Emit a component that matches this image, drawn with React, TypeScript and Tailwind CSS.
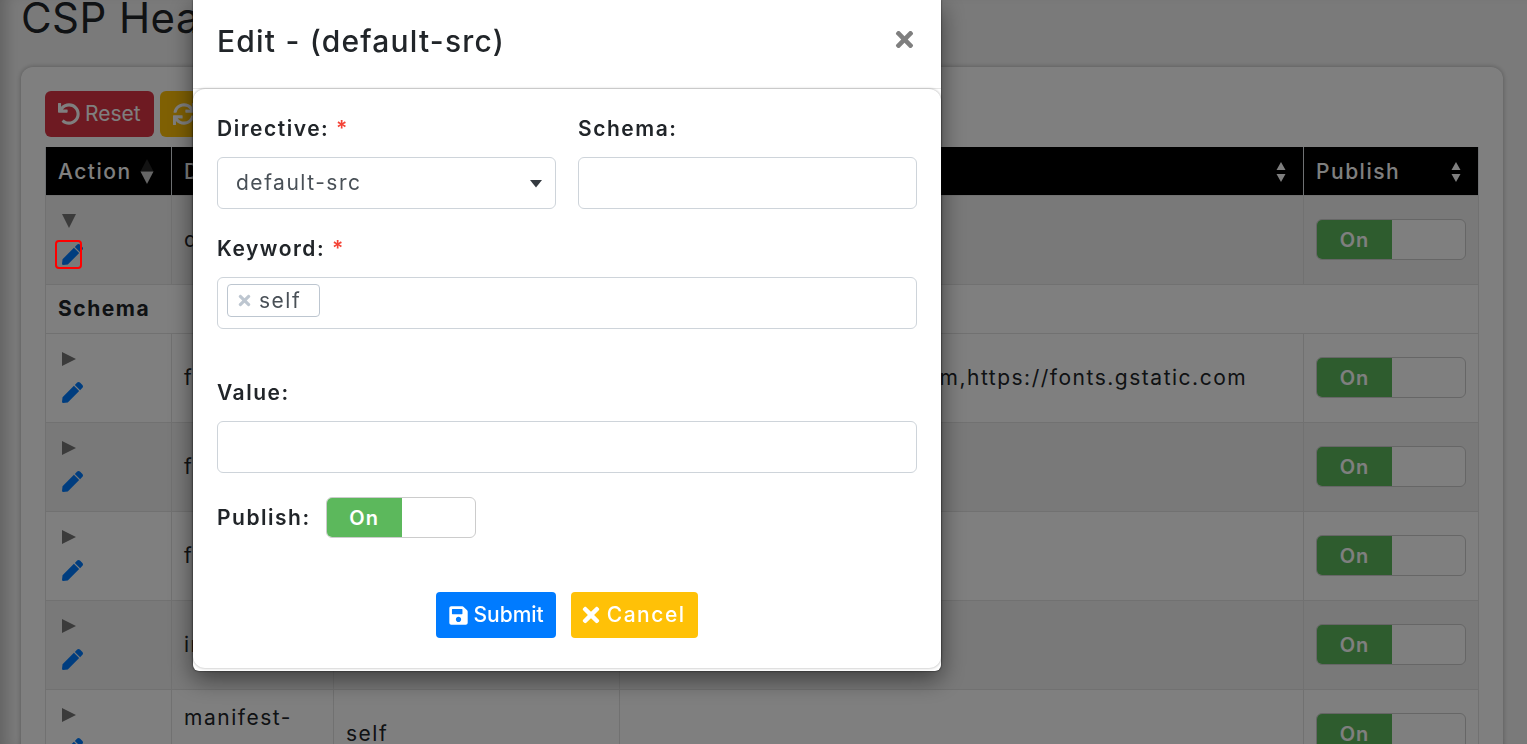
import React, { useState } from 'react';
import { FaPen, FaSave, FaSync, FaTimes, FaUndo } from 'react-icons/fa';

interface IDirective {
  name: string;
  keyword: string;
  value: string;
}

const directives: IDirective[] = [
  { name: 'default-src', keyword: 'self', value: '' },
  {
    name: 'font-src',
    keyword: 'self',
    value: 'https://fonts.googleapis.com,https://fonts.gstatic.com',
  },
  { name: 'form-action', keyword: 'self', value: '' },
  { name: 'frame-src', keyword: 'self', value: '' },
  { name: 'img-src', keyword: 'self', value: '' },
  { name: 'manifest-src', keyword: 'self', value: '' },
];

const Switch: React.FC<{ label: string }> = ({ label }) => {
  const [on, setOn] = useState<boolean>(true);

  return (
    <label className="flex h-[41px] w-[150px] cursor-pointer overflow-hidden rounded-md border border-[#ccc] bg-white tracking-wider">
      <input
        type="checkbox"
        className="sr-only"
        aria-label={label}
        checked={on}
        onChange={() => setOn(!on)}
      />
      {on ? (
        <span className="flex w-[75px] items-center justify-center bg-[#5cb85c] text-[20px] font-semibold text-white">
          On
        </span>
      ) : (
        <span className="ml-auto flex w-[75px] items-center justify-center bg-[#eee] text-[20px] font-semibold">
          Off
        </span>
      )}
    </label>
  );
};

const SortIcon: React.FC<{ active?: boolean }> = ({ active = false }) => {
  if (active) {
    return (
      <svg width="14" height="26" viewBox="0 0 14 26" fill="#fff">
        <path d="M7 0l6.500 12.500h-13z" opacity="0.15" />
        <path d="M7 25l6.500-12.500h-13z" opacity="0.8" />
      </svg>
    );
  }
  return (
    <svg width="10" height="20" viewBox="0 0 10 20" fill="#fff">
      <path d="M5 0l4.5 8h-9zM5 20l4.5-8h-9z" />
    </svg>
  );
};

const HeadCell: React.FC<{ title: string; className?: string; active?: boolean }> = ({
  title,
  className = '',
  active = false,
}) => (
  <th className={`h-12 border-x border-[#dee2e6] bg-black px-3 pt-[2px] text-left font-medium text-white ${className}`}>
    <div className={active ? 'flex items-center gap-2' : 'flex items-center justify-between pr-[5px]'}>
      {title}
      <SortIcon active={active} />
    </div>
  </th>
);

const DirectiveRow: React.FC<{ item: IDirective; open?: boolean; striped?: boolean }> = ({
  item,
  open = false,
  striped = false,
}) => (
  <tr className={striped ? 'bg-[#f2f2f2]' : 'bg-white'}>
    <td className="h-[89px] border border-[#e2e2e2] pl-4">
      <div className="flex flex-col items-start gap-4">
        <button type="button" aria-label="Toggle details" className="text-[#777]">
          <svg width="14" height="14" viewBox="0 0 14 14" fill="currentColor">
            <path d={open ? 'M0 0h14L7 14z' : 'M0 0v14l14-7z'} />
          </svg>
        </button>
        <a href="#edit" aria-label={`Edit ${item.name}`} className="relative text-[#007bff]">
          <FaPen size={21} />
          {open && (
            <span className="absolute -left-[7px] -top-1 z-50 h-[29px] w-[27px] rounded-[4px] border-2 border-[#f00]" />
          )}
        </a>
      </div>
    </td>
    <td className="border border-[#e2e2e2] px-3">{item.name}</td>
    <td className="border border-[#e2e2e2] px-3">{item.keyword}</td>
    <td className="border border-[#e2e2e2] px-3">{item.value}</td>
    <td className="border border-[#e2e2e2] px-3">
      <Switch label={`Publish ${item.name}`} />
    </td>
  </tr>
);

const EditModal: React.FC = () => (
  <div className="fixed inset-0 z-40 bg-black/50 pl-[193px]">
    <div
      role="dialog"
      aria-label="Edit - (default-src)"
      className="w-[748px] rounded-b-md bg-white shadow-[0_8px_24px_rgba(0,0,0,0.5),0_0_2px_rgba(0,0,0,0.8)]"
    >
      <div className="flex h-[88px] items-start justify-between px-6 pt-[18px]">
        <h5 className="text-[30px] font-medium leading-[46px] tracking-[0.04em]">Edit - (default-src)</h5>
        <button type="button" aria-label="Close" className="mt-[9px] text-[#7f7f7f]">
          <FaTimes size={25} />
        </button>
      </div>

      <div className="border-t border-[#e6e6e6] pb-[3px]">
        <form className="rounded-xl px-6 pb-[30px] pt-6 shadow-[0_0_3px_rgba(0,0,0,0.35)]">
          <div className="grid grid-cols-2 gap-[22px]">
            <div>
              <label htmlFor="directive" className="mb-3 block leading-8 font-semibold">
                Directive: <span className="text-[#f44336]">*</span>
              </label>
              <div className="relative">
                <select
                  id="directive"
                  className="h-[52px] w-full appearance-none rounded-md border border-[#ced4da] bg-white px-[18px] text-[#495057]"
                >
                  {directives.map((d) => (
                    <option key={d.name}>{d.name}</option>
                  ))}
                </select>
                <svg
                  className="pointer-events-none absolute right-[14px] top-[23px]"
                  width="12"
                  height="8"
                  viewBox="0 0 12 8"
                  fill="#343a40"
                >
                  <path d="M0 0h12L6 7.500z" />
                </svg>
              </div>
            </div>
            <div>
              <label htmlFor="schema" className="mb-3 block leading-8 font-semibold">
                Schema:
              </label>
              <input id="schema" className="h-[52px] w-full rounded-md border border-[#ced4da] px-[18px]" />
            </div>
          </div>

          <label htmlFor="keyword" className="mb-3 mt-6 block leading-8 font-semibold">
            Keyword: <span className="text-[#f44336]">*</span>
          </label>
          <div className="flex h-[52px] items-start rounded-md border border-[#ced4da] px-[9px] pt-[6px]">
            <span className="flex h-[33px] w-[93px] items-center gap-[6px] rounded-[4px] border border-[#bdc6d0] pl-2 text-[#495057]">
              <button type="button" aria-label="Remove self" className="text-[#bdc6d0]">
                <FaTimes size={17} />
              </button>
              self
            </span>
            <input id="keyword" className="h-[33px] min-w-0 flex-1 px-2 outline-none" />
          </div>

          <label htmlFor="value" className="mb-3 mt-12 block leading-8 font-semibold">
            Value:
          </label>
          <input id="value" className="h-[52px] w-full rounded-md border border-[#ced4da] px-[18px]" />

          <div className="mt-6 flex items-center gap-[15px]">
            <span className="font-semibold">Publish:</span>
            <Switch label="Publish" />
          </div>

          <div className="mt-[54px] flex justify-center gap-[15px]">
            <button
              type="submit"
              className="flex h-[46px] items-center gap-1 rounded-[4px] bg-[#007bff] px-3 font-medium tracking-normal text-white"
            >
              <FaSave size={21} />
              Submit
            </button>
            <button
              type="button"
              className="flex h-[46px] items-center gap-1 rounded-[4px] bg-[#ffc107] pl-2 pr-3 font-medium text-white"
            >
              <FaTimes size={24} />
              Cancel
            </button>
          </div>
        </form>
      </div>
    </div>
  </div>
);

const App: React.FC = () => {
  return (
    <div className="h-screen overflow-hidden bg-[#f5f5f5] px-6 pl-[21px] font-['Inter',sans-serif] text-[21px] tracking-[0.072em] text-[#212529] shadow-[inset_14px_0_14px_-8px_rgba(0,0,0,0.2)]">
      <h1 className="h-[67px] text-[42px] leading-9 tracking-[0.01em]">CSP Headers</h1>

      <div className="rounded-xl bg-white p-6 shadow-[0_0_5px_rgba(0,0,0,0.3)]">
        <div className="mb-[10px] flex gap-[6px] tracking-normal">
          <button
            type="button"
            className="flex h-[46px] items-center gap-[5px] rounded-md bg-[#dc3545] px-[13px] text-white"
          >
            <FaUndo size={22} />
            Reset
          </button>
          <button
            type="button"
            className="flex h-[46px] items-center gap-[5px] rounded-md bg-[#ffc107] px-[13px] text-white"
          >
            <FaSync size={22} />
            Refresh
          </button>
        </div>

        <table className="w-full table-fixed border-collapse">
          <thead>
            <tr>
              <HeadCell title="Action" className="w-[126px]" active />
              <HeadCell title="Directive" className="w-[162px]" />
              <HeadCell title="Keyword" className="w-[286px]" />
              <HeadCell title="Value" />
              <HeadCell title="Publish" className="w-[175px]" />
            </tr>
          </thead>
          <tbody>
            <DirectiveRow item={directives[0]} open striped />
            <tr className="bg-white">
              <td colSpan={5} className="h-[49px] border border-[#e2e2e2] px-3 font-bold">
                Schema
              </td>
            </tr>
            {directives.slice(1).map((item, i) => (
              <DirectiveRow key={item.name} item={item} striped={i % 2 === 1} />
            ))}
          </tbody>
        </table>
      </div>

      <EditModal />
    </div>
  );
};

export default App;
